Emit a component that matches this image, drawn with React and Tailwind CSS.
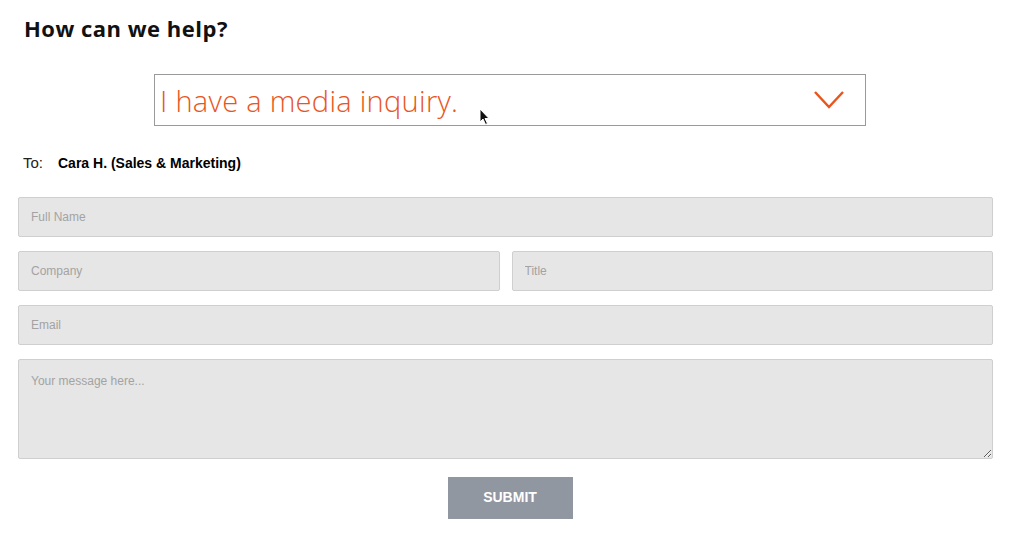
import { useState } from "react";

const inputCls =
  "w-full h-[40px] px-[12px] bg-[#e6e6e6] border border-[#cfcfcf] rounded-[2px] text-[12px] text-[#333] placeholder:text-[#a3a3a3] outline-none";

export default function App() {
  const [topic] = useState("I have a media inquiry.");

  return (
    <div className="w-[1011px] h-[536px] bg-white relative" style={{ fontFamily: "'Liberation Sans', Arial, sans-serif" }}>
      <h2 className="pl-[24px] pt-[14px] text-[22px] tracking-[0.5px] font-bold text-[#111] leading-[28px]" style={{ fontFamily: "'Open Sans', sans-serif" }}>
        How can we help?
      </h2>

      {/* Topic select */}
      <div className="ml-[154px] mt-[32px] w-[712px] h-[52px] border border-[#9a9a9a] flex items-center justify-between pl-[5px] pr-[20px]">
        <span className="text-[29px] tracking-[0.3px] font-light text-[#e8561e] leading-none" style={{ fontFamily: "'Open Sans', sans-serif" }}>
          {topic}
        </span>
        <svg width="32" height="20" viewBox="0 0 32 20" fill="none">
          <path d="M2 2 L16 17 L30 2" stroke="#e8561e" strokeWidth="2.5" />
        </svg>
      </div>

      {/* mouse pointer */}
      <svg className="absolute left-[479px] top-[108px]" width="12" height="18" viewBox="0 0 12 18">
        <path d="M1 1 L1 14 L4 11 L6.5 16.5 L8.5 15.5 L6 10.5 L10 10.5 Z" fill="#111" stroke="#fff" strokeWidth="1" />
      </svg>

      <div className="flex items-center pl-[23px] mt-[26px] text-[14px]">
        <span className="text-[#222] text-[15px] w-[35px]">To:</span>
        <span className="font-bold text-black">Cara H. (Sales &amp; Marketing)</span>
      </div>

      <form className="pl-[18px] pr-[18px] mt-[22px] flex flex-col gap-[14px]">
        <input className={inputCls} placeholder="Full Name" />
        <div className="flex gap-[12px]">
          <input className={inputCls} placeholder="Company" />
          <input className={inputCls} placeholder="Title" />
        </div>
        <input className={inputCls} placeholder="Email" />
        <textarea
          className="w-full h-[100px] px-[12px] py-[12px] bg-[#e6e6e6] border border-[#cfcfcf] rounded-[2px] text-[12px] text-[#333] placeholder:text-[#a3a3a3] outline-none resize-y"
          placeholder="Your message here..."
        />
        <div className="flex justify-center mt-[4px] pl-[9px]">
          <button type="button" className="w-[125px] h-[42px] bg-[#9197a1] text-white text-[14px] font-bold">
            SUBMIT
          </button>
        </div>
      </form>
    </div>
  );
}
